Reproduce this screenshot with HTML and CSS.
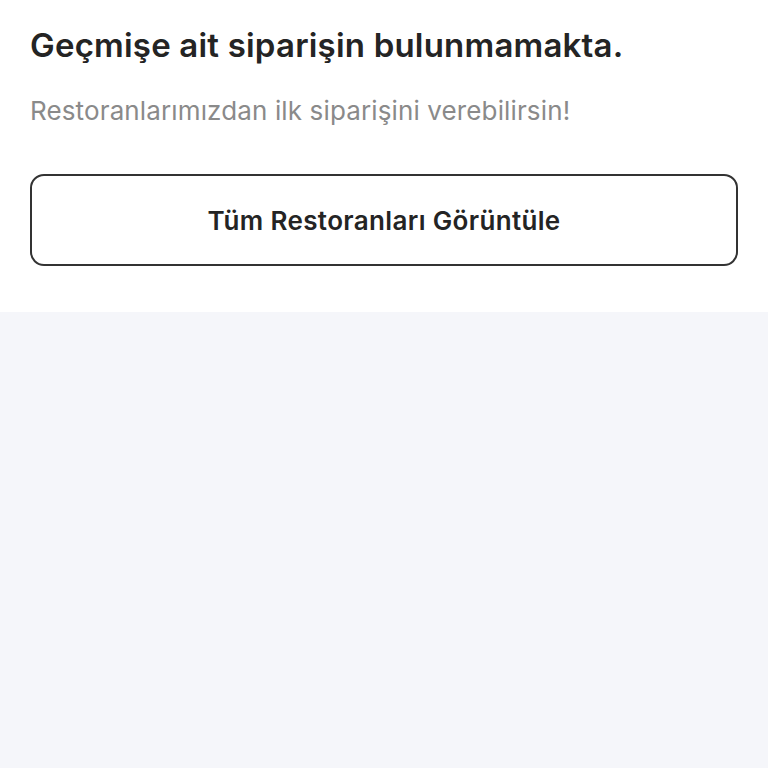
FILE: index.html
```html
<!DOCTYPE html>
<html lang="tr">
<head>
<meta charset="UTF-8" />
<meta name="viewport" content="width=device-width, initial-scale=1" />
<title>Geçmiş Siparişler</title>
<link rel="stylesheet" href="styles.css">
</head>
<body>

<div class="empty">
  <h1 class="empty-title">Geçmişe ait siparişin bulunmamakta.</h1>
  <p class="empty-text">Restoranlarımızdan ilk siparişini verebilirsin!</p>
  <button class="empty-btn">Tüm Restoranları Görüntüle</button>
</div>

</body>
</html>
```

FILE: styles.css
```css
html, body {
  height: 100%;
}
body {
  margin: 0;
  background: #f5f6fa;
  font-family: Inter, "Noto Sans", sans-serif;
  color: #222;
}
.empty {
  background: #fff;
  padding: 25px 30px 46px;
}
.empty-title {
  margin: 0;
  font-size: 33px;
  font-weight: 600;
  line-height: 40px;
  letter-spacing: 0.2px;
  color: #242424;
}
.empty-text {
  margin: 30px 0 0;
  font-size: 26px;
  line-height: 32px;
  letter-spacing: 0.13px;
  color: #8a8a8a;
}
.empty-btn {
  display: block;
  width: 100%;
  height: 92px;
  margin-top: 47px;
  background: #fff;
  border: 2px solid #333;
  border-radius: 14px;
  font-family: inherit;
  font-size: 26px;
  font-weight: 600;
  letter-spacing: 0.35px;
  color: #242424;
  cursor: pointer;
}
```
